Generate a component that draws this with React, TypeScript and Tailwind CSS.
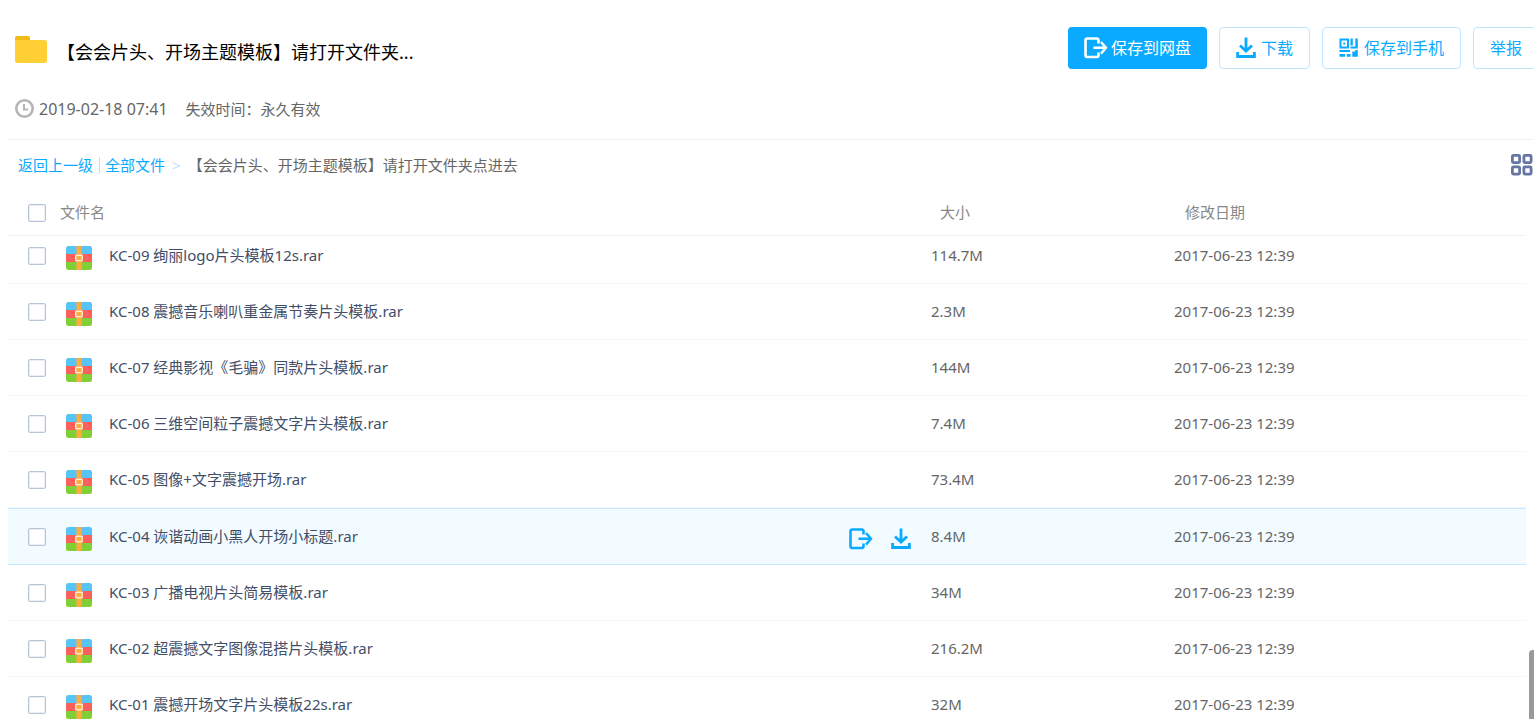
import React from 'react';
import clsx from 'clsx';

interface FileItem {
  name: string;
  size: string;
  modified: string;
}

const FILES: FileItem[] = [
  { name: 'KC-09 绚丽logo片头模板12s.rar', size: '114.7M', modified: '2017-06-23 12:39' },
  { name: 'KC-08 震撼音乐喇叭重金属节奏片头模板.rar', size: '2.3M', modified: '2017-06-23 12:39' },
  { name: 'KC-07 经典影视《毛骗》同款片头模板.rar', size: '144M', modified: '2017-06-23 12:39' },
  { name: 'KC-06 三维空间粒子震撼文字片头模板.rar', size: '7.4M', modified: '2017-06-23 12:39' },
  { name: 'KC-05 图像+文字震撼开场.rar', size: '73.4M', modified: '2017-06-23 12:39' },
  { name: 'KC-04 诙谐动画小黑人开场小标题.rar', size: '8.4M', modified: '2017-06-23 12:39' },
  { name: 'KC-03 广播电视片头简易模板.rar', size: '34M', modified: '2017-06-23 12:39' },
  { name: 'KC-02 超震撼文字图像混搭片头模板.rar', size: '216.2M', modified: '2017-06-23 12:39' },
  { name: 'KC-01 震撼开场文字片头模板22s.rar', size: '32M', modified: '2017-06-23 12:39' },
];

const ACTIVE_ROW = 5;

const FolderIcon = () => (
  <svg className="h-[27px] w-8 shrink-0" viewBox="0 0 32 27">
    <path d="M0 10V2a2 2 0 0 1 2-2h11a2 2 0 0 1 2 2v8z" fill="#f4b912" />
    <path d="M0 4h29.500a2.500 2.500 0 0 1 2.500 2.500v18a2.500 2.500 0 0 1-2.500 2.500h-27a2.500 2.500 0 0 1-2.500-2.500z" fill="#ffcf33" />
  </svg>
);

const ClockIcon = () => (
  <svg className="h-5 w-5 shrink-0" viewBox="0 0 20 20" fill="none" stroke="#b5b5b5">
    <circle cx="9.500" cy="9.500" r="8.200" strokeWidth="2.600" />
    <path d="M9 5v5.500h4" strokeWidth="2" />
  </svg>
);

const SaveIcon = () => (
  <svg className="h-[22px] w-6 shrink-0" viewBox="0 0 24 22" fill="none" stroke="currentColor" strokeWidth="2.600">
    <path d="M14.500 6.500V3.200a1.700 1.700 0 0 0-1.700-1.700H3.200a1.700 1.700 0 0 0-1.700 1.700v15.100a1.700 1.700 0 0 0 1.700 1.700h9.600a1.700 1.700 0 0 0 1.700-1.700V15.500" />
    <path d="M9.500 10.800h12.500M17 5l5 5.800-5 5.800" strokeWidth="2.400" />
  </svg>
);

const DownloadIcon = () => (
  <svg className="h-[22px] w-5 shrink-0" viewBox="0 0 20 22" fill="none" stroke="currentColor" strokeWidth="2.800">
    <path d="M10 .500v13M4 8.500l6 5.500 6-5.500" />
    <path d="M1.600 15v4.500h16.800V15" />
  </svg>
);

const QrIcon = () => (
  <svg className="h-5 w-5 shrink-0" viewBox="0 0 20 20" fill="currentColor">
    <path d="M.500.500h9.500v10H.500zM2.500 2.500v6H8v-6z" fillRule="evenodd" />
    <path d="M4.300 4.500h2v2h-2zM11.500.500h2.300v7h-2.300zM16.300.500h2.500v10h-2.500zM11.500 8.500h5v2h-5zM.500 12h10.500v2H.500zM.500 16h5.500v2.800H.500zM7.800 16H11.500v2.800H7.800zM16.300 12h2.500v2h-2.500zM13.300 13.500h5.500v5.300h-5.500z" />
  </svg>
);

const GridIcon = () => (
  <svg className="h-[22px] w-[22px]" viewBox="0 0 22 22" fill="none" stroke="#6676a3" strokeWidth="2.800">
    <rect x="1.400" y="1.400" width="7.200" height="7.200" rx="1" />
    <rect x="12.900" y="1.400" width="7.200" height="7.200" rx="1" />
    <rect x="1.400" y="12.900" width="7.200" height="7.200" rx="1" />
    <rect x="12.900" y="12.900" width="7.200" height="7.200" rx="1" />
  </svg>
);

const ArchiveIcon = () => (
  <svg className="mt-[3px] h-6 w-[26px] shrink-0" viewBox="0 0 26 24">
    <path d="M0 8V2.500A2.500 2.500 0 0 1 2.500 0h21A2.500 2.500 0 0 1 26 2.500V8z" fill="#56c4f7" />
    <path d="M0 8h26v8H0z" fill="#fb5f5c" />
    <path d="M0 16h26v5.500a2.500 2.500 0 0 1-2.500 2.500h-21A2.500 2.500 0 0 1 0 21.500z" fill="#80cf36" />
    <path d="M10.500 0h5v24h-5z" fill="#ffab3d" />
    <rect x="9.800" y="9.300" width="6.400" height="5.500" rx="0.500" fill="#ffab3d" stroke="#ffe9c4" strokeWidth="1.500" />
  </svg>
);

const Checkbox: React.FC<{ label: string }> = ({ label }) => (
  <input
    type="checkbox"
    aria-label={label}
    className="h-[18px] w-[18px] shrink-0 appearance-none rounded-[2px] border border-[#b9c4d8] bg-white inset-shadow-[0_0_0_1px_#eaeef5]"
  />
);

const outlineButton =
  'flex h-[42px] items-center gap-[5px] rounded-[4px] border border-[#c0e6ff] bg-white px-4 text-base text-[#09aaff]';

export default function App() {
  return (
    <div className="relative flex h-screen flex-col overflow-hidden bg-white pl-2 font-['Noto_Sans','Noto_Sans_CJK_SC',sans-serif] text-[15px] leading-5 text-[#666]">
      {/* Share header */}
      <header className="shrink-0 border-b border-[#f2f2f2] pt-[27px] pb-5 pl-[7px]">
        <div className="flex items-center justify-between">
          <div className="flex items-center gap-2.5 pt-[3px]">
            <FolderIcon />
            <h1 className="pt-1 text-lg leading-6 whitespace-nowrap text-black">【会会片头、开场主题模板】请打开文件夹...</h1>
          </div>
          <div className="-mr-[5px] flex shrink-0 gap-3 whitespace-nowrap">
            <button className="flex h-[42px] items-center gap-[3px] rounded-[4px] bg-[#09aaff] px-4 text-base text-white">
              <SaveIcon />
              保存到网盘
            </button>
            <button className={outlineButton}>
              <DownloadIcon />
              下载
            </button>
            <button className={outlineButton}>
              <QrIcon />
              保存到手机
            </button>
            <button className={outlineButton}>举报</button>
          </div>
        </div>
        <div className="mt-[30px] flex items-center">
          <ClockIcon />
          <span className="ml-1 text-base leading-5">2019-02-18 07:41</span>
          <span className="ml-[18px]">失效时间：永久有效</span>
        </div>
      </header>

      {/* Breadcrumb */}
      <nav className="flex h-[50px] shrink-0 items-center pl-2.5">
        <a href="#" className="text-[#09aaff]">返回上一级</a>
        <span className="mr-[5px] ml-1.5 h-4 w-px bg-[#c4dbfe]" />
        <a href="#" className="text-[#09aaff]">全部文件</a>
        <span className="mx-[7px] text-[#c4dbfe]">&gt;</span>
        <span>【会会片头、开场主题模板】请打开文件夹点进去</span>
        <button aria-label="缩略图模式" className="mr-px ml-auto">
          <GridIcon />
        </button>
      </nav>

      {/* File list */}
      <div className="min-h-0 flex-1 overflow-hidden pr-2">
        <table className="w-full table-fixed border-separate border-spacing-0 text-left">
          <thead>
            <tr className="h-[46px] text-[#888]">
              <th className="border-b border-[#f2f2f2] pl-5 font-normal">
                <div className="flex items-center gap-3.5">
                  <Checkbox label="全选" />
                  <span className="pb-0.5">文件名</span>
                </div>
              </th>
              <th className="w-[243px] border-b border-[#f2f2f2] pb-0.5 pl-[9px] font-normal">大小</th>
              <th className="w-[352px] border-b border-[#f2f2f2] pb-0.5 pl-[11px] font-normal">修改日期</th>
            </tr>
          </thead>
          <tbody>
            {FILES.map((file, index) => {
              const active = index === ACTIVE_ROW;
              const cell = clsx(
                'border-b pb-[7px] align-bottom',
                index > 0 && 'pt-2',
                active ? 'border-t border-[#c5e9ff] bg-[#f2fbff]' : 'border-[#f2f6fd]'
              );
              return (
                <tr key={file.name}>
                  <td className={cell}>
                    <div className="flex h-10 items-center pl-5">
                      <Checkbox label={file.name} />
                      <span className="ml-5">
                        <ArchiveIcon />
                      </span>
                      <span className="ml-[17px] pb-0.5 text-[#424e67]">{file.name}</span>
                      {active && (
                        <div className="mr-5 ml-auto flex gap-[18px] pt-1 text-[#09aaff]">
                          <button aria-label="保存到网盘">
                            <SaveIcon />
                          </button>
                          <button aria-label="下载">
                            <DownloadIcon />
                          </button>
                        </div>
                      )}
                    </div>
                  </td>
                  <td className={cell}>
                    <div className="flex h-10 items-center pb-0.5">{file.size}</div>
                  </td>
                  <td className={cell}>
                    <div className="flex h-10 items-center pb-0.5">{file.modified}</div>
                  </td>
                </tr>
              );
            })}
          </tbody>
        </table>
      </div>

      {/* Scroll thumb */}
      <div className="absolute right-0 bottom-0 h-[69px] w-[5px] rounded-tl-[4px] bg-[#999]" />
    </div>
  );
}
